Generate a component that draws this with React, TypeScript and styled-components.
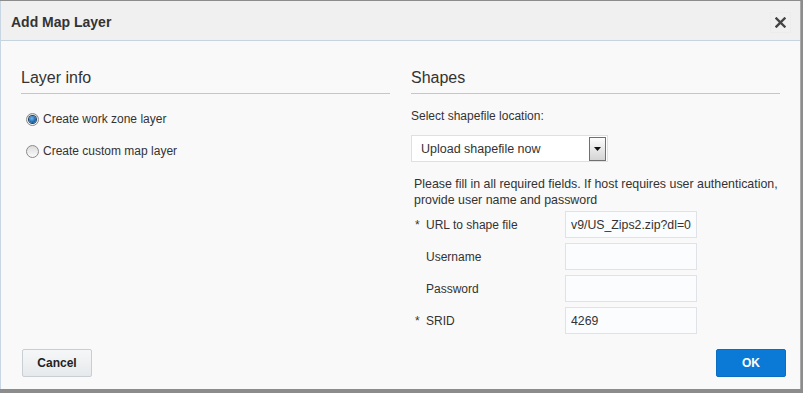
import styled, { createGlobalStyle } from 'styled-components';

const GlobalStyle = createGlobalStyle`
  html, body {
    margin: 0;
    padding: 0;
    height: 393px;
    overflow: hidden;
    background: #8c8c8c;
  }
  body {
    font-family: 'Liberation Sans', Arial, sans-serif;
    color: #333;
  }
`;

const App = () => {
  return (
    <>
      <GlobalStyle />
      <Dialog>
        <Header>
          <Title>Add Map Layer</Title>
          <CloseButton aria-label="Close">
            <svg width="11" height="11" viewBox="0 0 11 11">
              <path d="M1.5 1.5 L9.5 9.5 M9.5 1.5 L1.5 9.5" stroke="#444" strokeWidth="2.4" strokeLinecap="square" />
            </svg>
          </CloseButton>
        </Header>
        <Body>
          <Column>
            <SectionTitle>Layer info</SectionTitle>
            <RadioList>
              <RadioRow>
                <Radio $checked />
                <RadioLabel>Create work zone layer</RadioLabel>
              </RadioRow>
              <RadioRow>
                <Radio />
                <RadioLabel>Create custom map layer</RadioLabel>
              </RadioRow>
            </RadioList>
          </Column>
          <Column>
            <SectionTitle>Shapes</SectionTitle>
            <FieldCaption>Select shapefile location:</FieldCaption>
            <Select>
              <SelectValue>Upload shapefile now</SelectValue>
              <SelectArrow>
                <svg width="7" height="4" viewBox="0 0 7 4">
                  <path d="M0 0 H7 L3.5 4 Z" fill="#111" />
                </svg>
              </SelectArrow>
            </Select>
            <Help>
              Please fill in all required fields. If host requires user authentication,
              provide user name and password
            </Help>
            <FormGrid>
              <Required>*</Required>
              <FieldLabel>URL to shape file</FieldLabel>
              <TextInput defaultValue="v9/US_Zips2.zip?dl=0" />
              <Required />
              <FieldLabel>Username</FieldLabel>
              <TextInput />
              <Required />
              <FieldLabel>Password</FieldLabel>
              <TextInput type="password" />
              <Required>*</Required>
              <FieldLabel>SRID</FieldLabel>
              <TextInput defaultValue="4269" />
            </FormGrid>
          </Column>
        </Body>
        <Footer>
          <Button>Cancel</Button>
          <Button $primary>OK</Button>
        </Footer>
      </Dialog>
    </>
  );
};

const Dialog = styled.div`
  box-sizing: border-box;
  width: 801px;
  height: 388px;
  margin-top: 1px;
  background: #f9f9f9;
  border-left: 1px solid #c8d5e2;
  border-right: 1px solid #a9a9a9;
  display: flex;
  flex-direction: column;
`;

const Header = styled.div`
  box-sizing: border-box;
  height: 40px;
  background: #f0f0f0;
  border-bottom: 1px solid #c6d4e1;
  display: flex;
  align-items: center;
  justify-content: space-between;
  padding: 3px 9px 0 10px;
`;

const Title = styled.div`
  font-size: 14px;
  font-weight: bold;
  color: #333;
`;

const CloseButton = styled.button`
  width: 21px;
  height: 21px;
  padding: 0;
  border: 1px solid #ececec;
  background: #f0f0f0;
  display: flex;
  align-items: center;
  justify-content: center;
  cursor: pointer;
`;

const Body = styled.div`
  display: grid;
  grid-template-columns: 369px 369px;
  column-gap: 21px;
  padding: 27px 20px 0 20px;
`;

const Column = styled.div`
  display: flex;
  flex-direction: column;
`;

const SectionTitle = styled.div`
  font-size: 16px;
  line-height: 20px;
  padding-bottom: 5px;
  border-bottom: 1px solid #a9cdf0;
  color: #333;
`;

const RadioList = styled.div`
  display: flex;
  flex-direction: column;
  gap: 16px;
  padding: 17px 0 0 5px;
`;

const RadioRow = styled.label`
  display: flex;
  align-items: center;
  gap: 4px;
  height: 16px;
`;

const Radio = styled.span<{ $checked?: boolean }>`
  box-sizing: border-box;
  width: 13px;
  height: 13px;
  border-radius: 50%;
  border: 1px solid #8a8a8a;
  background: linear-gradient(#dcdcdc, #fafafa);
  display: flex;
  align-items: center;
  justify-content: center;
  &::after {
    content: '';
    display: ${p => (p.$checked ? 'block' : 'none')};
    width: 7px;
    height: 7px;
    border-radius: 50%;
    background: radial-gradient(circle at 40% 35%, #6fb6ee, #0e5aa0 70%);
    box-shadow: 0 0 0 1px #1c3f63;
  }
`;

const RadioLabel = styled.span`
  font-size: 12px;
  line-height: 16px;
`;

const FieldCaption = styled.div`
  font-size: 12px;
  line-height: 16px;
  margin-top: 14px;
`;

const Select = styled.div`
  box-sizing: border-box;
  width: 197px;
  height: 27px;
  margin-top: 11px;
  border: 1px solid #dde0e4;
  background: #fff;
  display: flex;
  align-items: center;
  justify-content: space-between;
  padding: 0 1px 0 9px;
`;

const SelectValue = styled.span`
  font-size: 12.5px;
`;

const SelectArrow = styled.span`
  box-sizing: border-box;
  width: 17px;
  height: 24px;
  border: 1px solid #707070;
  background: linear-gradient(#fdfdfd, #d4d4d4);
  display: flex;
  align-items: center;
  justify-content: center;
`;

const Help = styled.div`
  font-size: 12.4px;
  line-height: 16px;
  margin-top: 14px;
  padding-left: 3px;
`;

const FormGrid = styled.div`
  display: grid;
  grid-template-columns: 11px 139px 132px;
  grid-auto-rows: 27px;
  row-gap: 5px;
  align-items: center;
  margin-top: 3px;
  padding-left: 4px;
`;

const Required = styled.span`
  font-size: 12px;
`;

const FieldLabel = styled.span`
  font-size: 12px;
`;

const TextInput = styled.input`
  box-sizing: border-box;
  width: 132px;
  height: 27px;
  border: 1px solid #dfe3e8;
  background: #fbfcfe;
  padding: 0 3px 0 5px;
  font-family: 'Liberation Sans', Arial, sans-serif;
  font-size: 12.3px;
  color: #333;
  outline: none;
`;

const Footer = styled.div`
  margin-top: auto;
  display: flex;
  justify-content: space-between;
  padding: 0 14px 12px 21px;
`;

const Button = styled.button<{ $primary?: boolean }>`
  box-sizing: border-box;
  width: 70px;
  height: 28px;
  border-radius: 2px;
  font-family: 'Liberation Sans', Arial, sans-serif;
  font-size: 12px;
  font-weight: bold;
  cursor: pointer;
  border: 1px solid ${p => (p.$primary ? '#0a6fc2' : '#c9ced3')};
  color: ${p => (p.$primary ? '#fff' : '#222')};
  background: ${p => (p.$primary ? '#0b7ad6' : 'linear-gradient(#f6f7f8, #e6e9ec)')};
`;

export default App;
